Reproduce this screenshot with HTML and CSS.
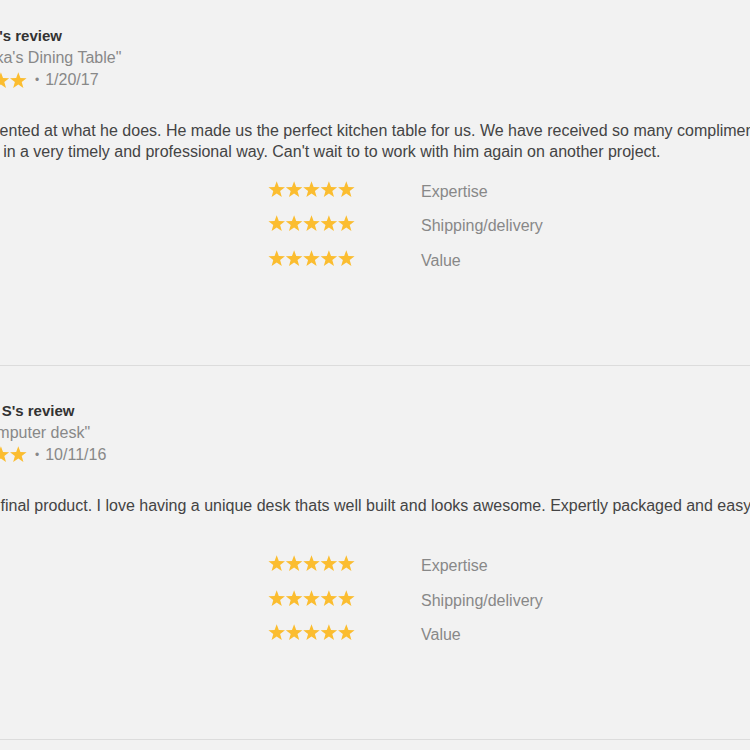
FILE: index.html
```html
<!DOCTYPE html>
<html>
<head lang="en">
    <meta charset="UTF-8">
    <title>Reviews</title>
    <link rel="stylesheet" href="styles.css">
</head>
<body>
<svg class="defs" width="0" height="0">
    <symbol id="star" viewBox="0 0 17.4 17">
        <polygon points="8.7,0.2 10.82,5.99 16.97,6.21 12.12,10.01 13.81,15.94 8.7,12.5 3.59,15.94 5.28,10.01 0.43,6.21 6.58,5.99"/>
    </symbol>
</svg>
<div class="reviews">
    <!--review 1-->
    <div class="review">
        <h3 class="review-title">Kevin W's review</h3>
        <div class="review-item">"Dominika's Dining Table"</div>
        <div class="review-meta">
            <svg class="stars" viewBox="0 0 87 17"><use href="#star" x="0" width="17.4" height="17"/><use href="#star" x="17.4" width="17.4" height="17"/><use href="#star" x="34.8" width="17.4" height="17"/><use href="#star" x="52.2" width="17.4" height="17"/><use href="#star" x="69.6" width="17.4" height="17"/></svg>
            <span class="dot">&bull;</span> 1/20/17
        </div>
        <p class="review-text">Ian is talented at what he does. He made us the perfect kitchen table for us. We have received so many compliments on it. He completed<br>his work in a very timely and professional way. Can't wait to to work with him again on another project.</p>
        <div class="ratings">
            <div class="rating-row">
                <svg class="stars" viewBox="0 0 87 17"><use href="#star" x="0" width="17.4" height="17"/><use href="#star" x="17.4" width="17.4" height="17"/><use href="#star" x="34.8" width="17.4" height="17"/><use href="#star" x="52.2" width="17.4" height="17"/><use href="#star" x="69.6" width="17.4" height="17"/></svg>
                <span class="rating-label">Expertise</span>
            </div>
            <div class="rating-row">
                <svg class="stars" viewBox="0 0 87 17"><use href="#star" x="0" width="17.4" height="17"/><use href="#star" x="17.4" width="17.4" height="17"/><use href="#star" x="34.8" width="17.4" height="17"/><use href="#star" x="52.2" width="17.4" height="17"/><use href="#star" x="69.6" width="17.4" height="17"/></svg>
                <span class="rating-label">Shipping/delivery</span>
            </div>
            <div class="rating-row">
                <svg class="stars" viewBox="0 0 87 17"><use href="#star" x="0" width="17.4" height="17"/><use href="#star" x="17.4" width="17.4" height="17"/><use href="#star" x="34.8" width="17.4" height="17"/><use href="#star" x="52.2" width="17.4" height="17"/><use href="#star" x="69.6" width="17.4" height="17"/></svg>
                <span class="rating-label">Value</span>
            </div>
        </div>
    </div>
    <!--review 2-->
    <div class="review">
        <h3 class="review-title">Roberto S's review</h3>
        <div class="review-item">"Oak computer desk"</div>
        <div class="review-meta">
            <svg class="stars" viewBox="0 0 87 17"><use href="#star" x="0" width="17.4" height="17"/><use href="#star" x="17.4" width="17.4" height="17"/><use href="#star" x="34.8" width="17.4" height="17"/><use href="#star" x="52.2" width="17.4" height="17"/><use href="#star" x="69.6" width="17.4" height="17"/></svg>
            <span class="dot">&bull;</span> 10/11/16
        </div>
        <p class="review-text">Like the final product. I love having a unique desk thats well built and looks awesome. Expertly packaged and easy to put together,<br>thanks!</p>
        <div class="ratings">
            <div class="rating-row">
                <svg class="stars" viewBox="0 0 87 17"><use href="#star" x="0" width="17.4" height="17"/><use href="#star" x="17.4" width="17.4" height="17"/><use href="#star" x="34.8" width="17.4" height="17"/><use href="#star" x="52.2" width="17.4" height="17"/><use href="#star" x="69.6" width="17.4" height="17"/></svg>
                <span class="rating-label">Expertise</span>
            </div>
            <div class="rating-row">
                <svg class="stars" viewBox="0 0 87 17"><use href="#star" x="0" width="17.4" height="17"/><use href="#star" x="17.4" width="17.4" height="17"/><use href="#star" x="34.8" width="17.4" height="17"/><use href="#star" x="52.2" width="17.4" height="17"/><use href="#star" x="69.6" width="17.4" height="17"/></svg>
                <span class="rating-label">Shipping/delivery</span>
            </div>
            <div class="rating-row">
                <svg class="stars" viewBox="0 0 87 17"><use href="#star" x="0" width="17.4" height="17"/><use href="#star" x="17.4" width="17.4" height="17"/><use href="#star" x="34.8" width="17.4" height="17"/><use href="#star" x="52.2" width="17.4" height="17"/><use href="#star" x="69.6" width="17.4" height="17"/></svg>
                <span class="rating-label">Value</span>
            </div>
        </div>
    </div>
</div>
</body>
</html>
```
FILE: styles.css
```css
*{
    margin:0;
    padding:0;
}
html,body{
    overflow:hidden;
}
body{
    background-color:#f2f2f2;
    font-family:"Liberation Sans", Arial, sans-serif;
    color:#444;
}
.defs{
    position:absolute;
}
.reviews{
    /*page is scrolled, first review starts above the fold*/
    margin-top:-9px;
    margin-left:-60px;
    width:1200px;
}
.review{
    padding:33px 0 89px;
    border-bottom:1px solid #dcdcdc;
}
.review-title{
    font-size:15px;
    font-weight:bold;
    line-height:23px;
    color:#333;
}
.review-item{
    font-size:16px;
    line-height:22px;
    color:#888;
}
.review-meta{
    display:flex;
    align-items:center;
    height:22px;
    font-size:16px;
    color:#888;
}
.review-meta .dot{
    margin:0 6px 0 8px;
    font-size:12px;
}
.stars{
    width:87px;
    height:17px;
    fill:#fbbd30;
}
.review-text{
    margin-top:29px;
    font-size:16px;
    line-height:21px;
    color:#444;
    white-space:nowrap;
}
.ratings{
    margin-top:10px;
    margin-left:328px;
}
.rating-row{
    display:grid;
    grid-template-columns:153px auto;
    align-items:center;
    height:34.5px;
}
.rating-label{
    font-size:16px;
    color:#888;
    padding-top:5px;
}
```
